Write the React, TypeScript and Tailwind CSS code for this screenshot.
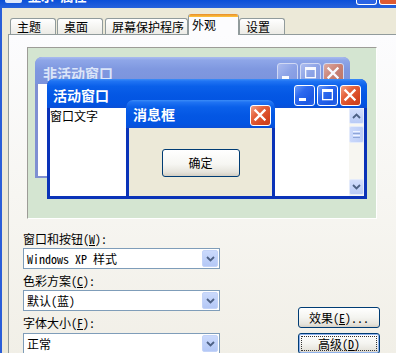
import React from "react";

const CJK = "font-['Noto_Sans_Mono_CJK_SC','Noto_Sans_CJK_SC','Noto_Sans',sans-serif]";

function MinIcon() {
  return (
    <svg width="21" height="21" viewBox="0 0 21 21" className="block">
      <rect x="5" y="13" width="7" height="3" fill="white" />
    </svg>
  );
}

function MaxIcon() {
  return (
    <svg width="21" height="21" viewBox="0 0 21 21" className="block">
      <rect x="5" y="4" width="11" height="3" fill="white" />
      <rect x="5" y="4" width="1.3" height="11" fill="white" />
      <rect x="14.7" y="4" width="1.3" height="11" fill="white" />
      <rect x="5" y="14" width="11" height="1.3" fill="white" />
    </svg>
  );
}

function CloseIcon() {
  return (
    <svg width="21" height="21" viewBox="0 0 21 21" className="block">
      <path d="M5.5 5.5 L14.5 14.5 M14.5 5.5 L5.5 14.5" stroke="white" strokeWidth="2.4" strokeLinecap="square" />
    </svg>
  );
}

function ActiveBtn({ kind }: { kind: "min" | "max" | "close" }) {
  const cls =
    kind === "close"
      ? "bg-[linear-gradient(135deg,#f3a287_0%,#e5633d_35%,#d54520_75%,#c9401e_100%)]"
      : "bg-[linear-gradient(135deg,#6c9cf8_0%,#2d69ef_35%,#1c58e3_75%,#2f66e6_100%)]";
  return (
    <div className={`w-[21px] h-[21px] rounded-[3px] border border-white box-border overflow-hidden flex items-center justify-center ${cls}`}>
      <div className="-m-px">{kind === "min" ? <MinIcon /> : kind === "max" ? <MaxIcon /> : <CloseIcon />}</div>
    </div>
  );
}

function InactiveBtn({ kind }: { kind: "min" | "max" | "close" }) {
  const cls =
    kind === "close"
      ? "bg-[linear-gradient(135deg,#e2ab9f_0%,#cc7f6d_50%,#c27563_100%)]"
      : "bg-[linear-gradient(135deg,#aebef0_0%,#8ea4e6_50%,#8599e0_100%)]";
  return (
    <div className={`w-[21px] h-[21px] rounded-[3px] border border-[#d5ddf5] box-border overflow-hidden flex items-center justify-center opacity-95 ${cls}`}>
      <div className="-m-px">{kind === "min" ? <MinIcon /> : kind === "max" ? <MaxIcon /> : <CloseIcon />}</div>
    </div>
  );
}

function Chevron({ up }: { up?: boolean }) {
  return (
    <svg width="9" height="6" viewBox="0 0 9 6" className="block">
      <path d={up ? "M1 5 L4.5 1.5 L8 5" : "M1 1 L4.5 4.5 L8 1"} stroke="#4d6185" strokeWidth="1.8" fill="none" />
    </svg>
  );
}

function Tab({ children, w, ml }: { children: React.ReactNode; w: string; ml?: string }) {
  return (
    <div
      className={`${w} ${ml ?? ""} h-[16px] box-border border border-b-0 border-[#919b9c] rounded-t-[3px] bg-[linear-gradient(180deg,#ffffff,#ecebe6)] pl-[6px] pt-[1px] text-[12px] leading-[14px] text-black whitespace-nowrap`}
    >
      {children}
    </div>
  );
}

function Select({ children, mt }: { children: React.ReactNode; mt: string }) {
  return (
    <div className={`${mt} h-[21px] box-border border border-[#7f9db9] bg-white flex items-center`}>
      <div className="flex-1 pl-[3px] text-[12px] leading-[14px] text-black whitespace-nowrap">{children}</div>
      <div className="w-[16px] h-[17px] mr-px rounded-[2px] border border-[#c3d3f8] box-border bg-[linear-gradient(180deg,#cbdafc,#b4c8f6)] flex items-center justify-center">
        <Chevron />
      </div>
    </div>
  );
}

function XPButton({ children, focused }: { children: React.ReactNode; focused?: boolean }) {
  return (
    <div
      className={`h-[21px] box-border rounded-[3px] border ${focused ? "border-[#003c74] shadow-[inset_0_0_0_1px_#8fb2ec]" : "border-[#003c74]"} bg-[linear-gradient(180deg,#ffffff_0%,#f4f4f0_50%,#e6e4dc_85%,#d6d0c5_100%)] flex items-center justify-center p-[2px]`}
    >
      <div
        className={`w-full h-full flex items-center justify-center text-[12px] leading-[14px] text-black whitespace-nowrap ${focused ? "border border-dotted border-[#333]" : ""}`}
      >
        {children}
      </div>
    </div>
  );
}

export default function App() {
  return (
    <div className={`w-[396px] h-[353px] overflow-hidden flex flex-col bg-[#ece9d8] ${CJK}`}>
      {/* window title bar (mostly cropped) */}
      <div className="h-[8px] shrink-0 overflow-hidden flex bg-[linear-gradient(180deg,#0b4fd8,#2762dc)]">
        <div className="w-[17px] h-[14px] mt-[-11px] ml-[5px] bg-[#dfe8fa] rounded-[2px]" />
        <div className="mt-[-12px] ml-[6px] text-white font-bold text-[13px] leading-[16px] whitespace-nowrap">显示 属性</div>
        <div className="ml-auto flex gap-[2px] mr-[-6px]">
          <div className="w-[21px] h-[6px] mt-[-1px] rounded-b-[3px] border border-t-0 border-white box-border bg-[#2a64e4]" />
          <div className="w-[23px] h-[6px] mt-[-1px] rounded-b-[3px] border border-t-0 border-white box-border bg-[#de5a31]" />
        </div>
      </div>

      <div className="flex-1 flex flex-col border-l-[2px] border-[#2a5ed8] pt-[6px]">
        {/* tabs */}
        <div className="relative z-10 flex items-end h-[20px] ml-[8px]">
          <Tab w="w-[46px]">主题</Tab>
          <Tab w="w-[46px]" ml="ml-[1px]">桌面</Tab>
          <Tab w="w-[83px]" ml="ml-[2px]">屏幕保护程序</Tab>
          <div className="w-[51px] h-[21px] mb-[-1px] box-border border-x border-[#919b9c] rounded-t-[3px] overflow-hidden bg-[#fcfcfe] flex flex-col">
            <div className="h-[3px] bg-[linear-gradient(180deg,#e68b2c,#ffc73c)]" />
            <div className="pl-[3px] pt-[1px] text-[12px] leading-[14px] text-black">外观</div>
          </div>
          <Tab w="w-[46px]">设置</Tab>
        </div>

        {/* tab page */}
        <div className="ml-[6px] w-[420px] flex-1 box-border border-t border-l border-[#919b9c] bg-[linear-gradient(180deg,#fcfcfe_0%,#f7f6f2_50%,#f1efe7_100%)] pt-[12px] pl-[14px]">
          {/* preview */}
          <div className="ml-[4px] w-[350px] h-[172px] relative box-border border border-t-[#9d9c97] border-l-[#9d9c97] border-r-[#ffffff] border-b-[#ffffff] bg-[#d4e5d1] overflow-hidden">
            {/* inactive window */}
            <div className="absolute left-[7px] top-[9px] w-[315px] h-[121px] rounded-t-[7px] overflow-hidden bg-[#7f90d2] flex flex-col">
              <div className="h-[27px] shrink-0 flex items-start bg-[linear-gradient(180deg,#a9bbef_0%,#8ea6e8_12%,#7f98e0_45%,#7b93dc_100%)]">
                <div className="ml-[8px] mt-[9px] text-[14px] leading-[14px] font-bold text-[#dbe5f9] whitespace-nowrap">非活动窗口</div>
                <div className="ml-auto mr-[6px] mt-[6px] flex gap-[2px]">
                  <InactiveBtn kind="min" />
                  <InactiveBtn kind="max" />
                  <InactiveBtn kind="close" />
                </div>
              </div>
              <div className="flex-1 mx-[3px] mb-[2px] bg-white" />
            </div>

            {/* active window */}
            <div className="absolute left-[19px] top-[31px] w-[320px] h-[120px] rounded-t-[7px] overflow-hidden bg-[#0a33b8] flex flex-col">
              <div className="h-[29px] shrink-0 flex items-start bg-[linear-gradient(180deg,#3b8cf7_0%,#1f73f3_8%,#0a60ea_25%,#0457e4_55%,#0254e2_85%,#0a4ed6_100%)]">
                <div className="ml-[6px] mt-[9px] text-[14px] leading-[14px] font-bold text-white whitespace-nowrap">活动窗口</div>
                <div className="ml-auto mr-[6px] mt-[6px] flex gap-[2px]">
                  <ActiveBtn kind="min" />
                  <ActiveBtn kind="max" />
                  <ActiveBtn kind="close" />
                </div>
              </div>
              <div className="flex-1 mx-[3px] mb-[3px] bg-white flex">
                <div className="flex-1 pt-[1px] text-[12px] leading-[14px] text-black whitespace-nowrap">窗口文字</div>
                <div className="w-[15px] bg-[#f7f6f1] flex flex-col">
                  <div className="h-[16px] rounded-[2px] border border-[#e4ebfb] box-border bg-[linear-gradient(180deg,#d3defc,#b9cbf6)] flex items-center justify-center">
                    <Chevron up />
                  </div>
                  <div className="mt-[2px] h-[17px] rounded-[2px] border border-[#e4ebfb] box-border bg-[linear-gradient(90deg,#cad8fb,#bccdf7)] flex flex-col items-center justify-center gap-[1px]">
                    <div className="w-[7px] h-px bg-[#eef3fe]" />
                    <div className="w-[7px] h-px bg-[#8fa6d8]" />
                    <div className="w-[7px] h-px bg-[#eef3fe]" />
                    <div className="w-[7px] h-px bg-[#8fa6d8]" />
                  </div>
                  <div className="flex-1" />
                  <div className="h-[16px] mb-px rounded-[2px] border border-[#e4ebfb] box-border bg-[linear-gradient(180deg,#d3defc,#b9cbf6)] flex items-center justify-center">
                    <Chevron />
                  </div>
                </div>
              </div>
            </div>

            {/* message box */}
            <div className="absolute left-[98px] top-[52px] w-[149px] h-[99px] rounded-t-[7px] overflow-hidden bg-[#0a33b8] flex flex-col">
              <div className="h-[28px] shrink-0 flex items-start bg-[linear-gradient(180deg,#3b8cf7_0%,#1f73f3_8%,#0a60ea_25%,#0457e4_55%,#0254e2_85%,#0a4ed6_100%)]">
                <div className="ml-[7px] mt-[7px] text-[14px] leading-[14px] font-bold text-white whitespace-nowrap">消息框</div>
                <div className="ml-auto mr-[4px] mt-[5px] flex">
                  <ActiveBtn kind="close" />
                </div>
              </div>
              <div className="flex-1 mx-[3px] mb-[3px] bg-[#ece9d8] flex justify-center items-start pt-[21px]">
                <div className="w-[78px] h-[28px] box-border rounded-[3px] border border-[#003c74] bg-[linear-gradient(180deg,#ffffff_0%,#f6f6f2_55%,#e6e4dc_85%,#d3cec3_100%)] flex items-center justify-center text-[12px] leading-[14px] text-black">
                  确定
                </div>
              </div>
            </div>
          </div>

          {/* controls */}
          <div className="mt-[13px] flex items-end">
            <div className="w-[197px] flex flex-col text-[12px] leading-[14px] text-black">
              <div className="h-[14px] whitespace-nowrap">窗口和按钮(<span className="underline">W</span>):</div>
              <Select mt="mt-[2px]">Windows XP 样式</Select>
              <div className="mt-[5px] h-[14px] whitespace-nowrap">色彩方案(<span className="underline">C</span>):</div>
              <Select mt="mt-[2px]">默认(蓝)</Select>
              <div className="mt-[5px] h-[14px] whitespace-nowrap">字体大小(<span className="underline">F</span>):</div>
              <Select mt="mt-[3px]">正常</Select>
            </div>
            <div className="ml-[78px] w-[82px] flex flex-col gap-[5px]">
              <XPButton>
                效果(<span className="underline">E</span>)...
              </XPButton>
              <XPButton focused>
                高级(<span className="underline">D</span>)
              </XPButton>
            </div>
          </div>
        </div>
      </div>
    </div>
  );
}
